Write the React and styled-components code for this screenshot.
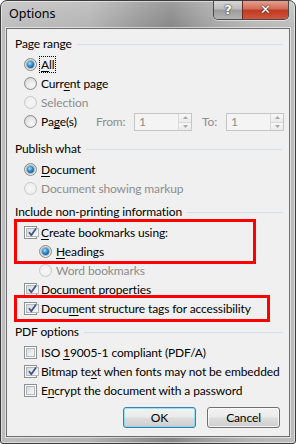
import React from "react";
import styled, { createGlobalStyle, css } from "styled-components";

const GlobalStyle = createGlobalStyle`
  html, body { margin: 0; padding: 0; background: #fff; }
  body { font-family: Lato, "Noto Sans", sans-serif; font-size: 12px; letter-spacing: -0.12px; color: #000; }
  * { box-sizing: border-box; }
`;

const Window = styled.div`
  width: 296px;
  height: 444px;
  display: flex;
  flex-direction: column;
  border: 1px solid #3c3c3c;
  border-radius: 7px 7px 3px 3px;
  background:
    linear-gradient(180deg, rgba(255,255,255,0.2) 0%, rgba(255,255,255,0) 30px),
    linear-gradient(90deg, #bdbdbd 0%, #b3b3b3 30%, #949494 48%, #858585 58%, #a0a0a0 70%, #b6b6b6 85%, #bcbcbc 100%);
  box-shadow: inset 0 0 0 1px rgba(255,255,255,0.5);
  overflow: hidden;
`;

const TitleBar = styled.div`
  height: 27px;
  display: flex;
  align-items: flex-start;
  flex: none;
`;

const Title = styled.div`
  font-family: "Noto Sans", sans-serif;
  font-size: 12.5px;
  letter-spacing: 0;
  line-height: 26px;
  padding-left: 8px;
  color: #000;
`;

const CaptionGroup = styled.div`
  margin-left: auto;
  margin-right: 6px;
  margin-top: -1px;
  display: flex;
  border: 1px solid #4a4a4a;
  border-top: none;
  border-radius: 0 0 5px 5px;
  overflow: hidden;
  box-shadow: 0 1px 0 rgba(255,255,255,0.5);
`;

const CaptionButton = styled.div`
  height: 19px;
  width: ${(p) => p.$w}px;
  display: flex;
  align-items: center;
  justify-content: center;
  color: #fff;
  font-family: "DejaVu Sans", sans-serif;
  font-weight: bold;
  font-size: 13px;
  text-shadow: 0 0 2px #333, 0 0 1px #222;
  ${(p) =>
    p.$close
      ? css`
          background: linear-gradient(180deg, #e8a493 0%, #d2705c 45%, #c23b22 55%, #d0553c 100%);
          border-left: 1px solid #6b2a20;
        `
      : css`
          background: linear-gradient(180deg, #dcdcdc 0%, #bcbcbc 45%, #9c9c9c 55%, #b4b4b4 100%);
        `}
`;

const Client = styled.div`
  flex: 1;
  margin: 0 5px 6px 5px;
  background: #f0f0f0;
  border: 1px solid #6e6e6e;
  box-shadow: 0 0 0 1px rgba(255,255,255,0.55);
  padding: 5px 0 0 0;
  display: flex;
  flex-direction: column;
`;

const Section = styled.div`
  display: flex;
  flex-direction: column;
  margin-bottom: ${(p) => p.$after ?? 4}px;
`;

const Header = styled.div`
  height: 19px;
  margin: 0 7px 2px 8px;
  display: flex;
  align-items: center;
  gap: 5px;
  white-space: nowrap;
`;

const Rule = styled.div`
  flex: 1;
  height: 1px;
  background: #d5dfe5;
  margin-top: 1px;
`;

const Item = styled.div`
  height: 19px;
  display: flex;
  align-items: center;
  padding-left: ${(p) => p.$indent ?? 17}px;
  gap: 4px;
  white-space: nowrap;
`;

const Label = styled.span`
  color: ${(p) => (p.$disabled ? "#8d8d8d" : "#000")};
  ${(p) =>
    p.$w &&
    css`
      width: ${p.$w}px;
      flex: none;
    `}
  ${(p) =>
    p.$focus &&
    css`
      outline: 1px dotted #000;
      outline-offset: 0px;
      padding: 0 1px;
      margin-left: -1px;
      line-height: 15px;
    `}
`;

const Key = styled.span`
  text-decoration: underline;
  text-underline-offset: 2px;
`;

const RadioCircle = styled.span`
  width: 13px;
  height: 13px;
  flex: none;
  border-radius: 50%;
  display: flex;
  align-items: center;
  justify-content: center;
  border: 1px solid ${(p) => (p.$disabled ? "#c9c9c9" : "#8a8a8a")};
  background: ${(p) =>
    p.$disabled
      ? "radial-gradient(circle at 50% 50%, #f6f6f6 0%, #ececec 100%)"
      : "radial-gradient(circle at 60% 65%, #f8f8f8 0%, #e6e6e6 50%, #cfcfcf 100%)"};
  &::after {
    content: "";
    display: ${(p) => (p.$checked ? "block" : "none")};
    width: 7px;
    height: 7px;
    border-radius: 50%;
    background: radial-gradient(circle at 40% 35%, #b6e4ff 0%, #3a9ad8 35%, #125d93 75%, #0c4470 100%);
    box-shadow: 0 0 0 1px rgba(30, 80, 120, 0.35);
  }
`;

const CheckBox = styled.span`
  width: 13px;
  height: 13px;
  flex: none;
  border: 1px solid #8e8f8f;
  background: #fff;
  padding: 1px;
  display: flex;
  & > span {
    flex: 1;
    display: flex;
    align-items: center;
    justify-content: center;
    border: 1px solid #b3b8bd;
    background: linear-gradient(135deg, #d6d9dc 0%, #eceeef 60%, #f9f9f9 100%);
  }
`;

const CheckMark = () => (
  <svg width="11" height="11" viewBox="0 0 11 11">
    <path d="M2 5.2 L4.3 8.2 L9 1.5" fill="none" stroke="#3f5788" strokeWidth="1.8" strokeLinejoin="round" />
  </svg>
);

const Radio = ({ checked, disabled, indent, children, focus }) => (
  <Item $indent={indent}>
    <RadioCircle $checked={checked} $disabled={disabled} />
    <Label $disabled={disabled} $focus={focus}>{children}</Label>
  </Item>
);

const Check = ({ checked, children }) => (
  <Item>
    <CheckBox>
      <span>{checked ? <CheckMark /> : null}</span>
    </CheckBox>
    <Label>{children}</Label>
  </Item>
);

const SpinRow = styled(Item)`
  gap: 0;
`;

const SpinRadio = styled.span`
  display: flex;
  align-items: center;
  gap: 4px;
  width: 72px;
  flex: none;
`;

const SpinBox = styled.span`
  width: 58px;
  height: 18px;
  flex: none;
  border: 1px solid #c5c5c5;
  background: #f4f4f4;
  display: flex;
  color: #8d8d8d;
  margin-top: 1px;
`;

const SpinValue = styled.span`
  flex: 1;
  padding-left: 4px;
  line-height: 16px;
`;

const SpinArrows = styled.span`
  width: 13px;
  display: flex;
  flex-direction: column;
  border-left: 1px solid #dadada;
  & > span {
    flex: 1;
    display: flex;
    align-items: center;
    justify-content: center;
    background: linear-gradient(180deg, #f7f7f7, #ebebeb);
  }
  & > span + span {
    border-top: 1px solid #dadada;
  }
`;

const Tri = ({ up }) => (
  <svg width="5" height="3" viewBox="0 0 5 3">
    <path d={up ? "M0 3 L2.5 0 L5 3 Z" : "M0 0 L5 0 L2.5 3 Z"} fill="#a9a9a9" />
  </svg>
);

const Spin = ({ value }) => (
  <SpinBox>
    <SpinValue>{value}</SpinValue>
    <SpinArrows>
      <span><Tri up /></span>
      <span><Tri /></span>
    </SpinArrows>
  </SpinBox>
);

const Highlight = styled.div`
  position: relative;
  display: flex;
  flex-direction: column;
  &::after {
    content: "";
    position: absolute;
    left: 7px;
    width: ${(p) => p.$w}px;
    top: ${(p) => p.$top}px;
    bottom: ${(p) => p.$bottom}px;
    border: 3px solid #f00;
    pointer-events: none;
  }
`;

const ButtonRow = styled.div`
  display: flex;
  justify-content: flex-end;
  gap: 11px;
  padding-right: 9px;
  margin-top: 3px;
`;

const DialogButton = styled.div`
  width: 73px;
  height: 21px;
  display: flex;
  align-items: center;
  justify-content: center;
  border-radius: 3px;
  border: 1px solid ${(p) => (p.$default ? "#3c7fb1" : "#707070")};
  background: linear-gradient(180deg, #f2f2f2 0%, #ebebeb 48%, #dddddd 52%, #cfcfcf 100%);
  box-shadow: inset 0 0 0 1px ${(p) => (p.$default ? "rgba(72,216,251,0.55)" : "rgba(255,255,255,0.7)")};
`;

export default function App() {
  return (
    <>
      <GlobalStyle />
      <Window>
        <TitleBar>
          <Title>Options</Title>
          <CaptionGroup>
            <CaptionButton $w={28}>?</CaptionButton>
            <CaptionButton $w={46} $close>✕</CaptionButton>
          </CaptionGroup>
        </TitleBar>
        <Client>
          <Section $after={8}>
            <Header>Page range<Rule /></Header>
            <Radio checked focus><Key>A</Key>ll</Radio>
            <Radio>Curr<Key>e</Key>nt page</Radio>
            <Radio disabled>Selection</Radio>
            <SpinRow>
              <SpinRadio>
                <RadioCircle />
                <Label>Pa<Key>g</Key>e(s)</Label>
              </SpinRadio>
              <Label $disabled $w={38}>From:</Label>
              <Spin value="1" />
              <Label $disabled $w={34} style={{ paddingLeft: 10 }}>To:</Label>
              <Spin value="1" />
            </SpinRow>
          </Section>

          <Section>
            <Header>Publish what<Rule /></Header>
            <Radio checked><Key>D</Key>ocument</Radio>
            <Radio disabled>Document showing markup</Radio>
          </Section>

          <Section>
            <Header>Include non-printing information<Rule /></Header>
            <Highlight $w={236} $top={-4} $bottom={-3}>
              <Check checked><Key>C</Key>reate bookmarks using:</Check>
              <Radio checked indent={32}><Key>H</Key>eadings</Radio>
            </Highlight>
            <Radio disabled indent={32}>Word bookmarks</Radio>
            <Check checked>Document p<Key>r</Key>operties</Check>
            <Highlight $w={250} $top={-4} $bottom={-4}>
              <Check checked>Docu<Key>m</Key>ent structure tags for accessibility</Check>
            </Highlight>
          </Section>

          <Section>
            <Header>PDF options<Rule /></Header>
            <Check>ISO <Key>1</Key>9005-1 compliant (PDF/A)</Check>
            <Check checked>Bitmap te<Key>x</Key>t when fonts may not be embedded</Check>
            <Check>E<Key>n</Key>crypt the document with a password</Check>
          </Section>

          <ButtonRow>
            <DialogButton $default>OK</DialogButton>
            <DialogButton>Cancel</DialogButton>
          </ButtonRow>
        </Client>
      </Window>
    </>
  );
}
